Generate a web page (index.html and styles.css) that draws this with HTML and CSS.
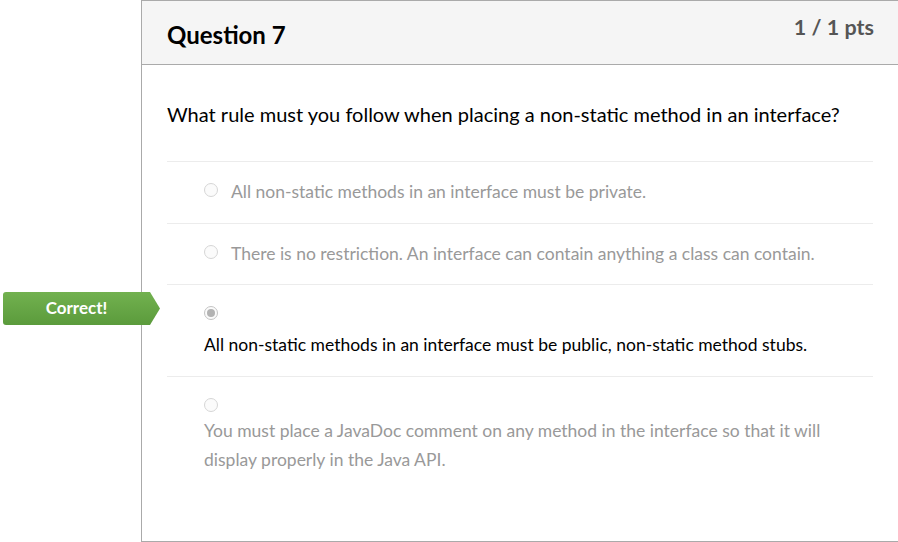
FILE: index.html
```html
<!DOCTYPE html>
<html lang="en">
<head>
<meta charset="utf-8">
<title>Question 7</title>
<link rel="stylesheet" href="styles.css">
</head>
<body>
<div class="page">
  <div class="question">
    <div class="question__header">
      <h2 class="question__title">Question 7</h2>
      <span class="question__pts">1 / 1 pts</span>
    </div>
    <div class="question__body">
      <p class="question__text">What rule must you follow when placing a non-static method in an interface?</p>
      <div class="answers">
        <div class="answer answer--inline">
          <span class="radio"></span>
          <span class="answer__text">All non-static methods in an interface must be private.</span>
        </div>
        <div class="answer answer--inline">
          <span class="radio"></span>
          <span class="answer__text">There is no restriction. An interface can contain anything a class can contain.</span>
        </div>
        <div class="answer answer--stacked answer--correct">
          <div class="correct-badge">Correct!</div>
          <div class="answer__radio-line"><span class="radio radio--checked"></span></div>
          <div class="answer__text">All non-static methods in an interface must be public, non-static method stubs.</div>
        </div>
        <div class="answer answer--stacked">
          <div class="answer__radio-line"><span class="radio"></span></div>
          <div class="answer__text">You must place a JavaDoc comment on any method in the interface so that it will display properly in the Java API.</div>
        </div>
      </div>
    </div>
  </div>
</div>
</body>
</html>
```

FILE: styles.css
```css
* { box-sizing: border-box; }
html, body { margin: 0; padding: 0; background: #fff; }
body {
  font-family: Lato, "Open Sans", sans-serif;
  color: #2d3b45;
  width: 898px;
  height: 542px;
  overflow: hidden;
}
.page {
  position: relative;
  padding-left: 141px;
}
.question {
  width: 900px;
  height: 542px;
  border: 1px solid #aaaaaa;
}
.question__header {
  display: flex;
  justify-content: space-between;
  align-items: flex-start;
  height: 64px;
  background: #f5f5f5;
  border-bottom: 1px solid #aaaaaa;
  padding: 0 24px 0 25px;
  width: 756px;
}
.question__title {
  margin: 18px 0 0;
  font-size: 24px;
  font-weight: 700;
  line-height: 32px;
  color: #000;
}
.question__pts {
  margin-top: 11px;
  font-size: 21.5px;
  font-weight: 700;
  line-height: 30px;
  color: #555555;
}
.question__body {
  padding: 0 0 0 25px;
  width: 731px;
}
.question__text {
  margin: 34px 0 0;
  font-size: 20px;
  line-height: 30px;
  color: #000;
  height: 62px;
}
.answers { display: flex; flex-direction: column; }
.answer {
  position: relative;
  border-top: 1px solid #ececec;
  padding: 15px 0 17px 37px;
  font-size: 17.5px;
  line-height: 29px;
  color: #999999;
}
.answer:nth-child(2) { padding-bottom: 16px; }
.answer--inline {
  display: flex;
  align-items: center;
  gap: 13px;
}
.answer--inline .radio { margin-bottom: 3px; }
.answer--stacked { padding-top: 16px; }
.answer--correct { color: #000; padding-top: 14px; }
.answer__radio-line {
  height: 23px;
  display: flex;
  align-items: center;
}
.answer--correct .answer__radio-line { height: 28px; margin-bottom: 3px; }
.radio {
  display: inline-block;
  width: 14px;
  height: 14px;
  border-radius: 50%;
  border: 1px solid #d6d6d6;
  background: #fbfbfb;
  position: relative;
  flex: none;
}
.radio--checked { border-color: #c4c4c4; }
.radio--checked::after {
  content: "";
  position: absolute;
  left: 2px;
  top: 2px;
  width: 8px;
  height: 8px;
  border-radius: 50%;
  background: #b3b3b3;
}
.correct-badge {
  position: absolute;
  left: -164px;
  top: 7px;
  width: 157px;
  height: 33px;
  background: linear-gradient(#72b14f, #5b9b3c);
  color: #fff;
  font-weight: 700;
  font-size: 17px;
  line-height: 31px;
  text-align: center;
  padding-right: 10px;
  border-radius: 3px 0 0 3px;
  clip-path: polygon(0 0, 147px 0, 157px 50%, 147px 100%, 0 100%);
}
```
